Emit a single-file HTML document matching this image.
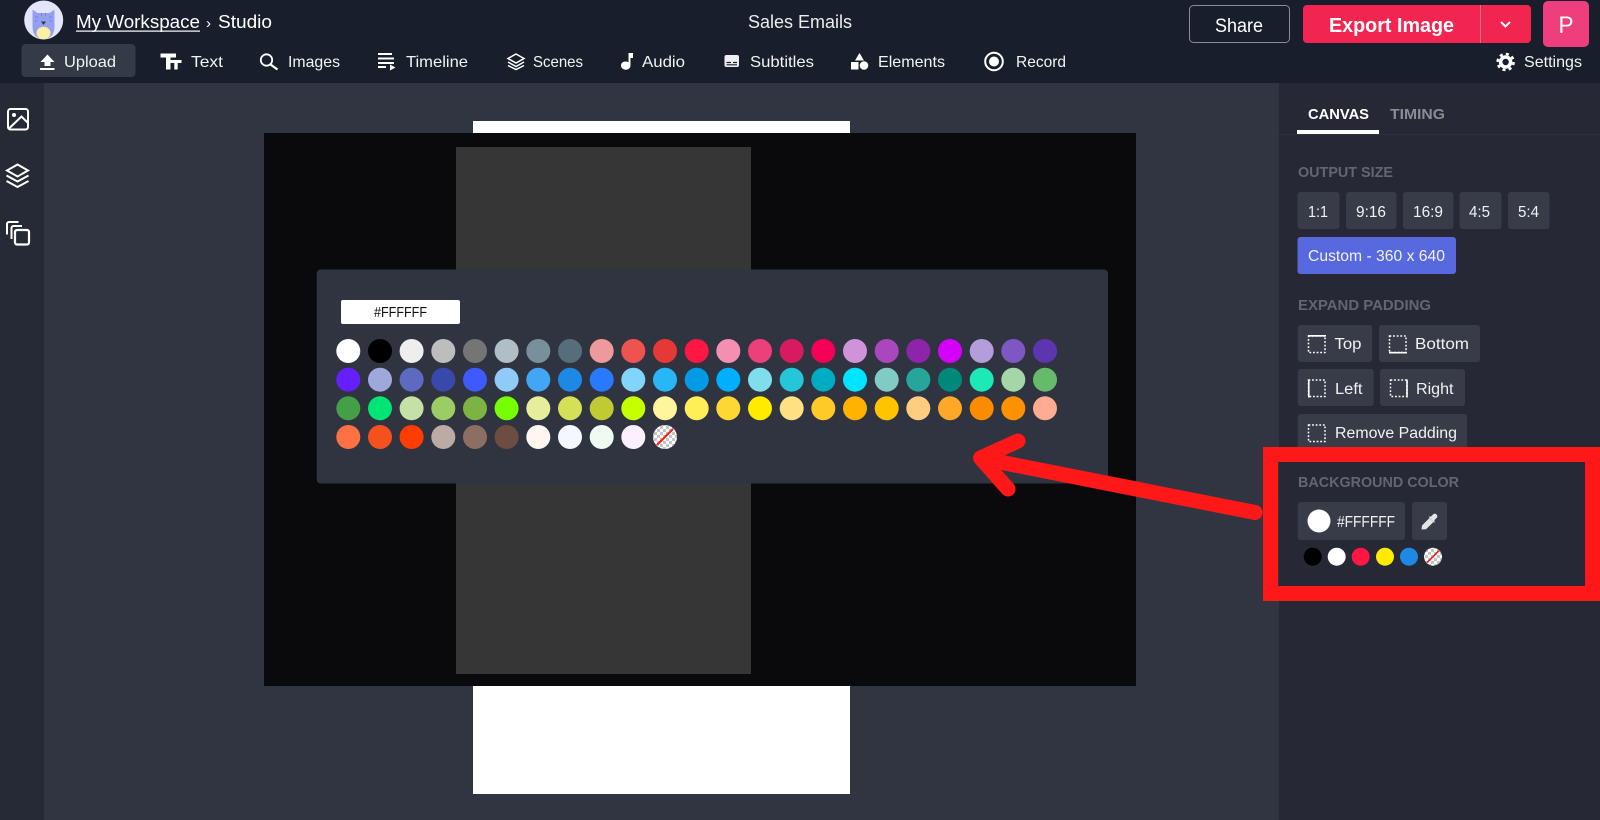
<!DOCTYPE html>
<html lang="en">
<head>
<meta charset="utf-8">
<title>Sales Emails</title>
<style>
html,body{margin:0;padding:0;width:1600px;height:820px;overflow:hidden;background:#313541}
svg{display:block}
text{font-family:"Liberation Sans",sans-serif;fill:#fff}
.t{font-size:16px;fill:#f2f3f5}
.h{font-size:15px;fill:#64666f;font-weight:bold}
.b{font-size:15.5px;fill:#f0f1f3}
</style>
</head>
<body>
<svg width="1600" height="820" viewBox="0 0 1600 820" xmlns="http://www.w3.org/2000/svg">
<defs>
<pattern id="chk" width="6" height="6" patternUnits="userSpaceOnUse">
<rect width="6" height="6" fill="#fff"/><rect width="3" height="3" fill="#c4c4c4"/><rect x="3" y="3" width="3" height="3" fill="#c4c4c4"/>
</pattern>
</defs>
<rect width="1600" height="820" fill="#313541"/>
<rect y="83" width="44" height="737" fill="#262a36"/>
<rect x="1279" y="83" width="321" height="737" fill="#262935"/>
<rect width="1600" height="83" fill="#181e2b"/>

<!-- avatar -->
<circle cx="43.7" cy="20" r="19.5" fill="#e3e6fb"/>
<path d="M32.500 26V9.500L37.500 13H49.500L54.500 9.500V26C54.500 33 52 38.800 43.700 38.800C35 38.800 32.500 33 32.500 26Z" fill="#959ff0"/>
<path d="M35 17H38M35 21H37.500M49 17H52M49.500 21H52M41.500 13V16M45.500 13V16" stroke="#7482df" stroke-width="1"/>
<ellipse cx="43.500" cy="33" rx="7" ry="6.200" fill="#fbf0a2"/>
<path d="M41 21.500H46L43.500 25Z" fill="#33364a"/>
<text x="76" y="28" font-size="18.500" textLength="124" lengthAdjust="spacingAndGlyphs">My Workspace</text>
<rect x="76" y="30.500" width="124" height="1.200" fill="#fff"/>
<text x="206" y="28" font-size="15" fill="#dfe0e3">›</text>
<text x="218" y="28" font-size="18.500" textLength="54" lengthAdjust="spacingAndGlyphs">Studio</text>
<text x="748" y="28" font-size="18.500" textLength="104" lengthAdjust="spacingAndGlyphs" style="fill:#eceded">Sales Emails</text>

<!-- top right -->
<rect x="1189.500" y="5.500" width="100" height="37" rx="4" fill="none" stroke="#8b8d92"/>
<text x="1215" y="32" font-size="19" textLength="48" lengthAdjust="spacingAndGlyphs">Share</text>
<rect x="1303" y="5" width="228" height="38" rx="4" fill="#f1254f"/>
<rect x="1480" y="5" width="1" height="38" fill="#fa6d88"/>
<text x="1329" y="32" font-size="20" font-weight="bold" textLength="125" lengthAdjust="spacingAndGlyphs">Export Image</text>
<path d="M1501 22L1505.500 26.500L1510 22" fill="none" stroke="#fff" stroke-width="2"/>
<rect x="1543" y="1" width="46" height="46" rx="5" fill="#ee3e7b"/>
<text x="1558.500" y="33" font-size="24" textLength="15" lengthAdjust="spacingAndGlyphs">P</text>

<!-- toolbar -->
<rect x="21.500" y="44" width="114" height="33" rx="4" fill="#353a48"/>
<path d="M47.500 54.500L54.500 62H50.500V66H44.500V62H40.500Z" fill="#fff"/><rect x="40" y="68" width="14.500" height="2" fill="#fff"/>
<text class="t" x="64" y="67" textLength="52" lengthAdjust="spacingAndGlyphs">Upload</text>

<path d="M160.500 53.500H176V57.500H170.500V69.500H166V57.500H160.500Z" fill="#fff"/>
<path d="M170.500 60H181.500V63H177.700V69.500H174.300V63H170.500Z" fill="#fff"/>
<text class="t" x="191" y="67" textLength="32" lengthAdjust="spacingAndGlyphs">Text</text>

<circle cx="266.500" cy="60" r="5.700" fill="none" stroke="#fff" stroke-width="1.800"/>
<path d="M270.500 64.500L277.500 69.500" stroke="#fff" stroke-width="2.200"/>
<text class="t" x="288" y="67" textLength="52" lengthAdjust="spacingAndGlyphs">Images</text>

<path d="M378 54H392M378 58.500H394M378 63H394M378 67H386" stroke="#fff" stroke-width="2"/>
<path d="M390 64.500L395.500 67.500L390 70.500Z" fill="#fff"/>
<text class="t" x="406" y="67" textLength="62" lengthAdjust="spacingAndGlyphs">Timeline</text>

<path d="M516 54L524 58.500L516 63L508 58.500ZM508 62L516 66.500L524 62M508 65.500L516 69.500L524 65.500" fill="none" stroke="#fff" stroke-width="1.500"/>
<text class="t" x="533" y="67" textLength="50" lengthAdjust="spacingAndGlyphs">Scenes</text>

<path d="M628.500 53H633V58H630.500V65.500C630.500 68 628.500 69.700 626 69.700C623 69.700 621 68 621 65.500C621 63 623 61.500 625.500 61.500C626.800 61.500 627.800 61.800 628.500 62.300Z" fill="#fff"/>
<text class="t" x="642" y="67" textLength="43" lengthAdjust="spacingAndGlyphs">Audio</text>

<rect x="724.500" y="55" width="14.500" height="12" rx="2" fill="#f0f0f2"/>
<path d="M726.500 62.500H731M733 62.500H737M726.500 64.800H737" stroke="#181e2b" stroke-width="1.200"/>
<text class="t" x="750" y="67" textLength="64" lengthAdjust="spacingAndGlyphs">Subtitles</text>

<path d="M859.500 53L864 60.500H855Z" fill="#fff"/><rect x="851" y="62" width="7.500" height="7.500" fill="#fff"/><circle cx="864" cy="65.500" r="4.300" fill="#fff"/>
<text class="t" x="878" y="67" textLength="67" lengthAdjust="spacingAndGlyphs">Elements</text>

<circle cx="994" cy="61.500" r="8.800" fill="none" stroke="#fff" stroke-width="2"/><circle cx="994" cy="61.500" r="5" fill="#fff"/>
<text class="t" x="1016" y="67" textLength="50" lengthAdjust="spacingAndGlyphs">Record</text>

<circle cx="1505.600" cy="62" r="5" fill="none" stroke="#fff" stroke-width="3.600"/>
<circle cx="1505.600" cy="62" r="8" fill="none" stroke="#fff" stroke-width="2.500" stroke-dasharray="3.100 3.180"/>
<text class="t" x="1524" y="67" textLength="58" lengthAdjust="spacingAndGlyphs">Settings</text>

<!-- left rail -->
<rect x="8" y="109" width="20" height="20.500" rx="2.500" fill="none" stroke="#fff" stroke-width="2"/>
<circle cx="14" cy="115" r="2" fill="#fff"/>
<path d="M9 128.500L21.500 116.500L27.500 122.500" fill="none" stroke="#fff" stroke-width="2"/>
<path d="M17.500 164.500L28 170.500L17.500 176.500L7 170.500Z M6.500 175.500L17.500 181.500L28.500 175.500 M6.500 181L17.500 187L28.500 181" fill="none" stroke="#fff" stroke-width="2"/>
<rect x="15" y="230" width="14" height="14.500" rx="2" fill="none" stroke="#fff" stroke-width="2.200"/>
<path d="M22 226H13.500A2 2 0 0 0 11.500 228V239M18.500 222H9A2 2 0 0 0 7 224V234.500" fill="none" stroke="#fff" stroke-width="2"/>

<!-- canvas -->
<rect x="473" y="121" width="377" height="673" fill="#fff"/>
<rect x="264" y="133" width="872" height="553" fill="#0a0a0c"/>
<rect x="456" y="147" width="295" height="527" fill="#363636"/>

<!-- popup -->
<rect x="316.700" y="269.500" width="791.300" height="214" rx="4" fill="#303440"/>
<rect x="341" y="300" width="119" height="24" rx="2" fill="#fff"/>
<text x="374" y="317" font-size="14.500" style="fill:#111" textLength="53" lengthAdjust="spacingAndGlyphs">#FFFFFF</text>

<g>
<circle cx="348.300" cy="351" r="12" fill="#ffffff"/><circle cx="380" cy="351" r="12" fill="#000000"/><circle cx="411.600" cy="351" r="12" fill="#eeeeee"/><circle cx="443.300" cy="351" r="12" fill="#bdbdbd"/><circle cx="475" cy="351" r="12" fill="#757575"/><circle cx="506.600" cy="351" r="12" fill="#b0bec5"/><circle cx="538.300" cy="351" r="12" fill="#78909c"/><circle cx="570" cy="351" r="12" fill="#546e7a"/><circle cx="601.700" cy="351" r="12" fill="#ef9a9a"/><circle cx="633.300" cy="351" r="12" fill="#ef5350"/><circle cx="665" cy="351" r="12" fill="#e53935"/><circle cx="696.700" cy="351" r="12" fill="#ff1744"/><circle cx="728.300" cy="351" r="12" fill="#f48fb1"/><circle cx="760" cy="351" r="12" fill="#ec407a"/><circle cx="791.700" cy="351" r="12" fill="#d81b60"/><circle cx="823.300" cy="351" r="12" fill="#f50057"/><circle cx="855" cy="351" r="12" fill="#ce93d8"/><circle cx="886.700" cy="351" r="12" fill="#ab47bc"/><circle cx="918.300" cy="351" r="12" fill="#8e24aa"/><circle cx="950" cy="351" r="12" fill="#d500f9"/><circle cx="981.700" cy="351" r="12" fill="#b39ddb"/><circle cx="1013.300" cy="351" r="12" fill="#7e57c2"/><circle cx="1045" cy="351" r="12" fill="#5e35b1"/>

<circle cx="348.300" cy="379.700" r="12" fill="#651fff"/><circle cx="380" cy="379.700" r="12" fill="#9fa8da"/><circle cx="411.600" cy="379.700" r="12" fill="#5c6bc0"/><circle cx="443.300" cy="379.700" r="12" fill="#3949ab"/><circle cx="475" cy="379.700" r="12" fill="#3d5afe"/><circle cx="506.600" cy="379.700" r="12" fill="#90caf9"/><circle cx="538.300" cy="379.700" r="12" fill="#42a5f5"/><circle cx="570" cy="379.700" r="12" fill="#1e88e5"/><circle cx="601.700" cy="379.700" r="12" fill="#2979ff"/><circle cx="633.300" cy="379.700" r="12" fill="#81d4fa"/><circle cx="665" cy="379.700" r="12" fill="#29b6f6"/><circle cx="696.700" cy="379.700" r="12" fill="#039be5"/><circle cx="728.300" cy="379.700" r="12" fill="#00b0ff"/><circle cx="760" cy="379.700" r="12" fill="#80deea"/><circle cx="791.700" cy="379.700" r="12" fill="#26c6da"/><circle cx="823.300" cy="379.700" r="12" fill="#00acc1"/><circle cx="855" cy="379.700" r="12" fill="#00e5ff"/><circle cx="886.700" cy="379.700" r="12" fill="#80cbc4"/><circle cx="918.300" cy="379.700" r="12" fill="#26a69a"/><circle cx="950" cy="379.700" r="12" fill="#00897b"/><circle cx="981.700" cy="379.700" r="12" fill="#1de9b6"/><circle cx="1013.300" cy="379.700" r="12" fill="#a5d6a7"/><circle cx="1045" cy="379.700" r="12" fill="#66bb6a"/>

<circle cx="348.300" cy="408.300" r="12" fill="#43a047"/><circle cx="380" cy="408.300" r="12" fill="#00e676"/><circle cx="411.600" cy="408.300" r="12" fill="#c5e1a5"/><circle cx="443.300" cy="408.300" r="12" fill="#9ccc65"/><circle cx="475" cy="408.300" r="12" fill="#7cb342"/><circle cx="506.600" cy="408.300" r="12" fill="#76ff03"/><circle cx="538.300" cy="408.300" r="12" fill="#e6ee9c"/><circle cx="570" cy="408.300" r="12" fill="#d4e157"/><circle cx="601.700" cy="408.300" r="12" fill="#c0ca33"/><circle cx="633.300" cy="408.300" r="12" fill="#c6ff00"/><circle cx="665" cy="408.300" r="12" fill="#fff59d"/><circle cx="696.700" cy="408.300" r="12" fill="#ffee58"/><circle cx="728.300" cy="408.300" r="12" fill="#fdd835"/><circle cx="760" cy="408.300" r="12" fill="#ffea00"/><circle cx="791.700" cy="408.300" r="12" fill="#ffe082"/><circle cx="823.300" cy="408.300" r="12" fill="#ffca28"/><circle cx="855" cy="408.300" r="12" fill="#ffb300"/><circle cx="886.700" cy="408.300" r="12" fill="#ffc400"/><circle cx="918.300" cy="408.300" r="12" fill="#ffcc80"/><circle cx="950" cy="408.300" r="12" fill="#ffa726"/><circle cx="981.700" cy="408.300" r="12" fill="#fb8c00"/><circle cx="1013.300" cy="408.300" r="12" fill="#ff9100"/><circle cx="1045" cy="408.300" r="12" fill="#ffab91"/>

<circle cx="348.300" cy="437" r="12" fill="#ff7043"/><circle cx="380" cy="437" r="12" fill="#f4511e"/><circle cx="411.600" cy="437" r="12" fill="#ff3d00"/><circle cx="443.300" cy="437" r="12" fill="#bcaaa4"/><circle cx="475" cy="437" r="12" fill="#8d6e63"/><circle cx="506.600" cy="437" r="12" fill="#6d4c41"/><circle cx="538.300" cy="437" r="12" fill="#fff6f0"/><circle cx="570" cy="437" r="12" fill="#f5f7ff"/><circle cx="601.700" cy="437" r="12" fill="#effaf0"/><circle cx="633.300" cy="437" r="12" fill="#fbf0fc"/>
<circle cx="665" cy="437" r="12" fill="url(#chk)"/>
<path d="M657 445L673 429" stroke="#ff1a1a" stroke-width="2"/>
</g>

<!-- right panel -->
<rect x="1279" y="134" width="321" height="1" fill="#2e313c"/>
<text x="1308" y="119" font-size="15" font-weight="bold" textLength="61" lengthAdjust="spacingAndGlyphs">CANVAS</text>
<text x="1390" y="119" font-size="15" font-weight="bold" style="fill:#8b8c91" textLength="55" lengthAdjust="spacingAndGlyphs">TIMING</text>
<rect x="1297" y="130" width="82" height="4" fill="#fff"/>

<text class="h" x="1298" y="177" textLength="95" lengthAdjust="spacingAndGlyphs">OUTPUT SIZE</text>
<g fill="#383c48">
<rect x="1297.500" y="192" width="42" height="37" rx="3"/>
<rect x="1346" y="192" width="50.500" height="37" rx="3"/>
<rect x="1403" y="192" width="50.500" height="37" rx="3"/>
<rect x="1459.500" y="192" width="42" height="37" rx="3"/>
<rect x="1508" y="192" width="41.500" height="37" rx="3"/>
<rect x="1297.700" y="325" width="74.500" height="37" rx="3"/>
<rect x="1379" y="325" width="101" height="37" rx="3"/>
<rect x="1297.700" y="369" width="76" height="37" rx="3"/>
<rect x="1380" y="369" width="85" height="37" rx="3"/>
<rect x="1297.700" y="414" width="169.300" height="37" rx="3"/>
<rect x="1297.700" y="502" width="107.300" height="38" rx="3"/>
<rect x="1412" y="502" width="35" height="38" rx="3"/>
</g>
<rect x="1297.500" y="237" width="158.500" height="37" rx="3" fill="#5869e0"/>
<text class="b" x="1308" y="217" textLength="20" lengthAdjust="spacingAndGlyphs">1:1</text>
<text class="b" x="1356" y="217" textLength="30" lengthAdjust="spacingAndGlyphs">9:16</text>
<text class="b" x="1413" y="217" textLength="30" lengthAdjust="spacingAndGlyphs">16:9</text>
<text class="b" x="1469" y="217" textLength="21" lengthAdjust="spacingAndGlyphs">4:5</text>
<text class="b" x="1518" y="217" textLength="21" lengthAdjust="spacingAndGlyphs">5:4</text>
<text class="b" x="1308" y="261" textLength="137" lengthAdjust="spacingAndGlyphs">Custom - 360 x 640</text>

<text class="h" x="1298" y="310" textLength="133" lengthAdjust="spacingAndGlyphs">EXPAND PADDING</text>

<g fill="none" stroke="#fff" stroke-width="1.500" stroke-dasharray="1.800 1.800">
<rect x="1308.500" y="336" width="16.500" height="16.500"/>
<rect x="1389.500" y="336" width="16.500" height="16.500"/>
<rect x="1308.500" y="380" width="16.500" height="16.500"/>
<rect x="1390.500" y="380" width="16.500" height="16.500"/>
<rect x="1308.500" y="425" width="16.500" height="16.500"/>
</g>
<path d="M1308 335.800H1326M1389 352.700H1407M1308.800 379.500V397.500M1407 379.500V397.500" stroke="#fff" stroke-width="1.600" fill="none"/>
<text class="b" x="1334.500" y="349" textLength="27" lengthAdjust="spacingAndGlyphs">Top</text>
<text class="b" x="1415" y="349" textLength="54" lengthAdjust="spacingAndGlyphs">Bottom</text>
<text class="b" x="1335" y="394" textLength="27.500" lengthAdjust="spacingAndGlyphs">Left</text>
<text class="b" x="1416" y="394" textLength="37.500" lengthAdjust="spacingAndGlyphs">Right</text>
<text class="b" x="1335" y="438" textLength="122" lengthAdjust="spacingAndGlyphs">Remove Padding</text>

<text class="h" x="1298" y="487" textLength="161" lengthAdjust="spacingAndGlyphs">BACKGROUND COLOR</text>
<circle cx="1319" cy="521" r="11.500" fill="#fff"/>
<text class="b" x="1337" y="527" textLength="58" lengthAdjust="spacingAndGlyphs">#FFFFFF</text>
<path d="M1421.500 529.500L1422 525.500L1429.500 518L1433.500 522L1426 529.300Z" fill="#e4e4e6"/>
<path d="M1428.500 516.800L1431 516.500L1433.500 514A2.600 2.600 0 0 1 1437 517.500L1434.500 520L1434.500 523Z" fill="#e4e4e6"/>

<circle cx="1312.700" cy="556.700" r="9" fill="#000"/>
<circle cx="1336.700" cy="556.700" r="9" fill="#fff"/>
<circle cx="1360.700" cy="556.700" r="9" fill="#ff1744"/>
<circle cx="1385" cy="556.700" r="9" fill="#ffea00"/>
<circle cx="1409" cy="556.700" r="9" fill="#1e88e5"/>
<circle cx="1433" cy="556.700" r="9" fill="url(#chk)"/>
<path d="M1427 562.700L1439 550.700" stroke="#ff1a1a" stroke-width="1.600"/>

<!-- annotations -->
<path d="M1270.500 454.500H1592.500V593.500H1270.500Z" fill="none" stroke="#fe1818" stroke-width="15"/>
<path d="M1255 512.500L982 458.500M1018 441L980.500 458L1008 489" fill="none" stroke="#fe1818" stroke-width="15" stroke-linecap="round" stroke-linejoin="round"/>
</svg>
</body>
</html>
